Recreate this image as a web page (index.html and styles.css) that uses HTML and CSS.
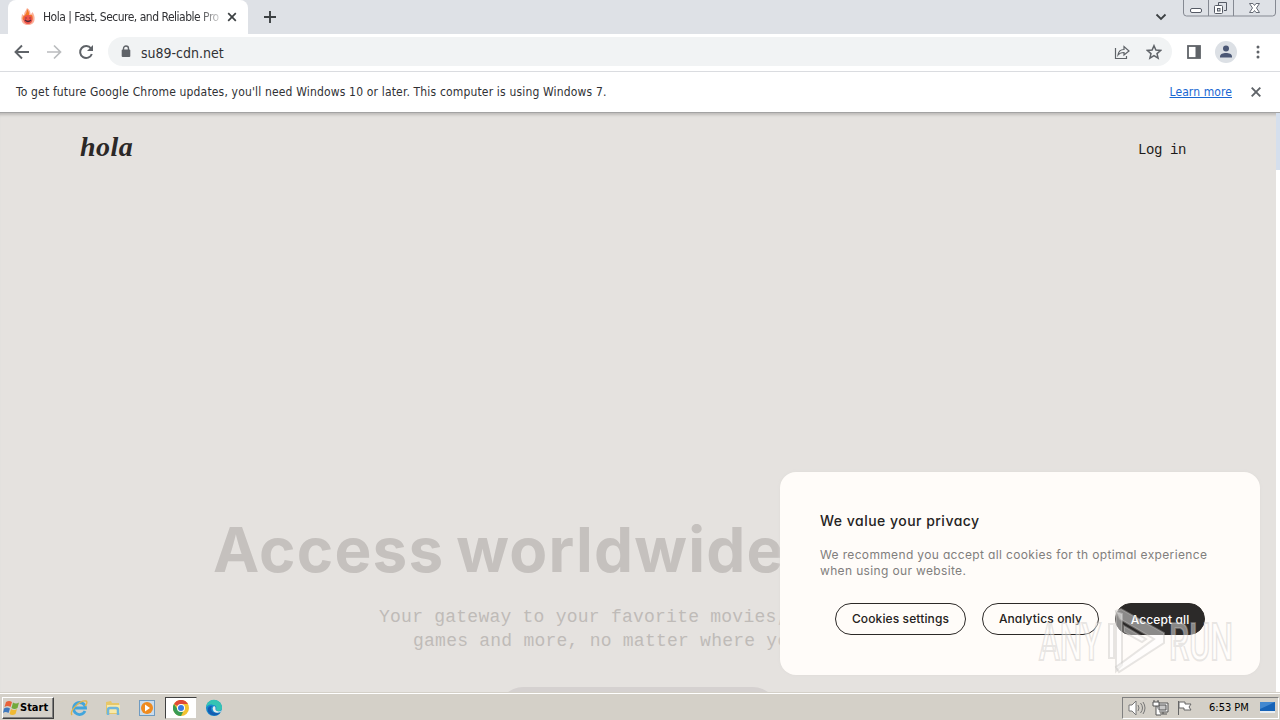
FILE: index.html
```html
<!DOCTYPE html>
<html lang="en">
<head>
  <meta charset="UTF-8" />
  <meta name="viewport" content="width=device-width, initial-scale=1.0"/>
  <title>Hola | Fast, Secure, and Reliable Proxy</title>
  <link rel="stylesheet" href="styles.css">
</head>
<body>

  <header class="tab-strip">
    <div class="tab">
      <svg class="favicon" width="16" height="18" viewBox="0 0 16 18">
        <path d="M2 6c1 1 1.500 1 2 1C4 4 6 3 7 0c2 1 3.500 3 3.500 6 1 0 1.500-1 2-2 1.500 2 2.500 5 2 8-.5 3.500-3 5-6.500 5s-6-1.500-6.500-5C1 9 2 8 2 6z" fill="#fbb09a"/>
        <path d="M7 1c1.500 2 2.500 4 2 6h3c1 2 1 4 0 5H3c-1-2 0-4 1-4 2-2 3-4 3-7z" fill="#f47b26"/>
        <circle cx="8" cy="11.500" r="4.500" fill="#ed5348"/>
        <path d="M5.500 10h1M9.500 10h1M5 12q3 3 6 0" stroke="#512735" stroke-width="1.200" fill="none"/>
      </svg>
      <span class="tab-title">Hola | Fast, Secure, and Reliable Pro</span>
      <svg class="tab-close" width="10" height="10" viewBox="0 0 10 10"><path d="M1.200 1.200l7.600 7.600M8.800 1.200L1.200 8.800" stroke="#3c4043" stroke-width="1.700"/></svg>
    </div>
    <svg class="new-tab" width="12" height="12" viewBox="0 0 12 12"><path d="M6 0v12M0 6h12" stroke="#3c4043" stroke-width="1.900"/></svg>
    <svg class="tab-search" width="12" height="8" viewBox="0 0 12 8"><path d="M1.500 1.500L6 6l4.500-4.500" stroke="#3c4043" stroke-width="1.800" fill="none"/></svg>
    <svg class="window-buttons" width="94" height="18" viewBox="0 0 94 18">
      <path d="M.5 0v13q0 3 3 3h86q3 0 3-3V0M25.500 0v16M50.500 0v16" fill="none" stroke="#858992"/>
      <rect x="7.500" y="8.500" width="11" height="4" rx="1.500" fill="#fff" stroke="#555a65"/>
      <path d="M35.500 5V2.500h8v8H41" fill="none" stroke="#555a65"/>
      <rect x="31.500" y="5.500" width="8" height="8" rx="1" fill="#fff" stroke="#555a65"/>
      <rect x="34.500" y="8.500" width="2.500" height="2.500" fill="#dee1e6" stroke="#555a65"/>
      <path d="M66.500 3.500h3.500l1.500 2 1.500-2h3.500l-3 4.500 3 4.500H73l-1.500-2-1.500 2h-3.500l3-4.500z" fill="#fff" stroke="#666b75"/>
    </svg>
  </header>

  <nav class="toolbar">
    <svg class="nav-icon" width="16" height="16" viewBox="0 0 16 16"><path d="M15 8H2M8 1.500L1.500 8 8 14.500" stroke="#5f6368" stroke-width="1.900" fill="none"/></svg>
    <svg class="nav-icon" width="16" height="16" viewBox="0 0 16 16"><path d="M1 8h13M8 1.500L14.500 8 8 14.500" stroke="#babcbe" stroke-width="1.700" fill="none"/></svg>
    <svg class="nav-icon" width="16" height="16" viewBox="0 0 16 16"><path d="M13 4.500A6 6 0 1 0 13.800 10" stroke="#5f6368" stroke-width="2" fill="none"/><path d="M15 1v6H9z" fill="#5f6368"/></svg>
    <div class="address-bar">
      <svg class="lock" width="10" height="13" viewBox="0 0 10 13"><path d="M2.500 5V3.500a2.500 2.500 0 0 1 5 0V5" fill="none" stroke="#5f6368" stroke-width="1.400"/><rect x=".7" y="4.500" width="8.600" height="7.500" rx="1" fill="#5f6368"/></svg>
      <span class="url">su89-cdn.net</span>
      <svg class="share" width="16" height="16" viewBox="0 0 16 16"><path d="M1.500 4v10.500h11V12M4 11c.5-4 3-5.500 6-5.500V2.500L15 7l-5 4V8.500C7 8.500 5.500 9 4 11z" fill="none" stroke="#5f6368" stroke-width="1.200"/></svg>
      <svg class="star" width="16" height="16" viewBox="0 0 16 16"><path d="M8 1.700l1.900 4.400 4.700.4-3.600 3.100 1.100 4.600L8 11.700l-4.100 2.500L5 9.600 1.400 6.500l4.700-.4z" fill="none" stroke="#5f6368" stroke-width="1.500"/></svg>
    </div>
    <svg class="side-panel" width="14" height="14" viewBox="0 0 14 14"><rect x="1" y="1" width="12" height="12" fill="#fff" stroke="#5f6368" stroke-width="1.800"/><path d="M8.500 1H13v12H8.500z" fill="#5f6368"/></svg>
    <svg class="avatar" width="22" height="22" viewBox="0 0 22 22"><circle cx="11" cy="11" r="11" fill="#dce0e5"/><circle cx="11" cy="7.500" r="3" fill="#4b5775"/><path d="M5 16.500v-1c0-2.500 3-3.500 6-3.500s6 1 6 3.500v1z" fill="#4b5775"/></svg>
    <svg class="menu-dots" width="4" height="14" viewBox="0 0 4 14"><g fill="#5f6368"><circle cx="2" cy="2" r="1.500"/><circle cx="2" cy="7" r="1.500"/><circle cx="2" cy="12" r="1.500"/></g></svg>
  </nav>

  <div class="infobar">
    <span class="infobar-text">To get future Google Chrome updates, you'll need Windows 10 or later. This computer is using Windows 7.</span>
    <a href="#" class="learn-more">Learn more</a>
    <svg width="10" height="10" viewBox="0 0 10 10"><path d="M.7.7l8.600 8.600M9.300.7L.7 9.300" stroke="#5f6368" stroke-width="1.900"/></svg>
  </div>

  <main class="page">
    <div class="site-header">
      <a class="logo">hola</a>
      <a class="login">Log in</a>
    </div>
    <section class="hero">
      <h1>Access worldwide</h1>
      <p>Your gateway to your favorite movies,</p>
      <p class="second">games and more, no matter where yo</p>
      <div class="hero-button"></div>
    </section>
    <div class="scrollbar"><div class="scroll-thumb"></div></div>

    <div class="cookie-box">
      <h2>We value your privacy</h2>
      <p>We recommend you accept all cookies for th optimal experience<br>when using our website.</p>
      <div class="cookie-buttons">
        <button class="settings">Cookies settings</button>
        <button class="analytics">Analytics only</button>
        <button class="accept">Accept all</button>
      </div>
    </div>

    <svg class="watermark" width="204" height="70" viewBox="0 0 204 70">
      <g fill="#fff" fill-opacity=".45" stroke="#c4c1be" stroke-opacity=".4" stroke-width="2">
        <text x="3" y="54" textLength="62" lengthAdjust="spacingAndGlyphs">ANY</text>
        <text x="133" y="54" textLength="64" lengthAdjust="spacingAndGlyphs">RUN</text>
        <path d="M73 18h5v34h-5zM80 6l6 2v51l-6 6z"/>
        <path d="M80 5l5-2 43 24v10L83 66l-3-5 38-28L84 13z"/>
        <path d="M88 20l22 13-4 3-18-10z"/>
      </g>
    </svg>
  </main>

  <footer class="taskbar">
    <button class="start">
      <svg width="17" height="16" viewBox="0 0 17 16"><path d="M3 2q3-2 6 0L7.500 7q-3-2-6 0z" fill="#e8623a"/><path d="M10 2.500q3 2 6 0L14.500 8q-3 2-6 0z" fill="#72a93b"/><path d="M1 8.500q3-2 6 0L5.500 13q-3-2-5.500 0z" fill="#3f78bd"/><path d="M8 9q3 2 6 0l-1.500 5q-3 2-6 0z" fill="#efb934"/></svg>
      Start
    </button>
    <div class="quick-launch">
      <svg width="18" height="18" viewBox="0 0 18 18"><path d="M15 12a6 6 0 1 1 .5-3H5" fill="none" stroke="#42a5dc" stroke-width="2.800"/><path d="M2 16C-1 12 10 1 16 2c2 1 0 4-1 5" fill="none" stroke="#e2b54d" stroke-width="1.400"/></svg>
      <svg width="18" height="18" viewBox="0 0 18 18"><path d="M2 3l5-1 1 2h7v11H2z" fill="#e7c769"/><path d="M3 6h13v8H3z" fill="#f8e9a8"/><path d="M4 16v-5q0-2 2-2h6q2 0 2 2v5" fill="none" stroke="#70b6dc" stroke-width="2.500"/></svg>
      <svg width="18" height="18" viewBox="0 0 18 18"><rect x="1.500" y="1.500" width="15" height="15" fill="#cadced" stroke="#6f9bc1"/><circle cx="9" cy="9" r="6" fill="#ef8b20"/><path d="M7 5.500l5 3.500-5 3.500z" fill="#fff"/></svg>
      <div class="task-active">
        <svg width="16" height="16" viewBox="0 0 16 16"><circle cx="8" cy="8" r="8" fill="#f2c230"/><path d="M8 8L1 4a8 8 0 0 1 14 0H8z" fill="#df4937"/><path d="M1 4l4 6 5 2-2 4A8 8 0 0 1 1 4z" fill="#399b54"/><circle cx="8" cy="8" r="4" fill="#fff"/><circle cx="8" cy="8" r="3" fill="#397be2"/></svg>
      </div>
      <svg width="18" height="18" viewBox="0 0 18 18"><circle cx="9" cy="9" r="8" fill="#168bcf"/><path d="M1.500 6A8 8 0 0 1 17 9c0 3-4 4-6 2 1-3 0-5-3-5-3-1-5 0-6.500 2z" fill="#35c4b3"/><path d="M7 7c-3 4 1 8 8 7-4 5-14 2-12-5 1-2 3-2 4-2z" fill="#145db1"/><path d="M9 7c3 1 0 4 3 5 2 1 4 0 5-1-1 3-8 4-9 0-1-2 0-3 1-4z" fill="#e7eced"/></svg>
    </div>
    <div class="tray">
      <svg width="18" height="16" viewBox="0 0 18 16"><path d="M1 5h3l4-4v14l-4-4H1z" fill="#fff" stroke="#777"/><path d="M10 5q2 3 0 6M12.500 3q4 5 0 10M15 2q4 6 0 12" fill="none" stroke="#777"/></svg>
      <svg width="18" height="16" viewBox="0 0 18 16"><path d="M5 3h11v9H5z" fill="#eee" stroke="#555"/><path d="M7 5h7v5H7zM8 14h7M11 12v2" fill="#c8c8c8" stroke="#555"/><path d="M1 2h6v4H1zM2 0v2M6 0v2M4 6v9h5" fill="#fff" stroke="#555"/></svg>
      <svg width="18" height="16" viewBox="0 0 18 16"><path d="M2.500 1v14M3 2h6v2h6l-2 3 2 3H8V8H3z" fill="#fff" stroke="#666"/></svg>
      <span class="clock">6:53 PM</span>
      <svg class="desktop-icon" width="15" height="15" viewBox="0 0 15 15"><path d="M0 2h15v9H0z" fill="#1763b7"/><path d="M0 2h15L0 9z" fill="#4288d0"/><path d="M0 11h15v2H0z" fill="#e8edf1"/></svg>
    </div>
  </footer>

</body>
</html>
```
FILE: styles.css
```css
* {
  box-sizing: border-box;
}
body {
  margin: 0;
  width: 1280px;
  height: 720px;
  overflow: hidden;
  display: flex;
  flex-direction: column;
  font-family: 'DejaVu Sans Condensed', 'DejaVu Sans', sans-serif;
  font-size: 12px;
  color: #303134;
  background: #fff;
}
svg {
  display: block;
  flex-shrink: 0;
}
h1, h2, p {
  margin: 0;
}
button {
  font: inherit;
  padding: 0;
}
.tab-strip {
  height: 34px;
  flex-shrink: 0;
  display: flex;
  background: #dee1e6;
  padding-left: 8px;
}
.tab {
  width: 240px;
  background: #fff;
  border-radius: 8px 8px 0 0;
  display: flex;
  align-items: center;
  padding-left: 12px;
}
.tab-title {
  width: 177px;
  margin-left: 7px;
  overflow: hidden;
  white-space: nowrap;
  letter-spacing: -0.5px;
  -webkit-mask-image: linear-gradient(to right, #000 155px, transparent 182px);
}
.tab-close {
  margin-left: 7px;
}
.new-tab {
  margin: 11px 0 0 16px;
}
.tab-search {
  margin: 13px 16px 0 auto;
}
.window-buttons {
  margin-right: 3px;
}
.toolbar {
  height: 38px;
  flex-shrink: 0;
  display: flex;
  align-items: center;
  padding: 0 20px 2px 14px;
  border-bottom: 1px solid #dadce0;
}
.nav-icon {
  margin-right: 16px;
}
.address-bar {
  width: 1064px;
  height: 29px;
  margin-left: -2px;
  display: flex;
  align-items: center;
  border-radius: 15px;
  background: #f1f3f4;
  padding: 0 10px 0 13px;
}
.url {
  margin-left: 10px;
  padding-top: 2px;
  font-size: 14px;
}
.share {
  margin-left: auto;
}
.star {
  margin-left: 16px;
}
.side-panel {
  margin-left: 15px;
}
.avatar {
  margin-left: 14px;
}
.menu-dots {
  margin-left: auto;
}
.infobar {
  height: 41px;
  flex-shrink: 0;
  display: flex;
  align-items: center;
  padding: 0 19px 1px 16px;
  border-bottom: 1px solid #a3a3a3;
}
.infobar-text {
  white-space: nowrap;
  letter-spacing: 0.165px;
}
.learn-more {
  margin-left: auto;
  margin-right: 19px;
  letter-spacing: 0.1px;
  color: #1967d2;
}
.page {
  position: relative;
  flex: 1;
  overflow: hidden;
  background: #e5e2df;
  box-shadow: inset 0 4px 3px -2px #bdbbb9;
}
.site-header {
  display: flex;
  justify-content: space-between;
  padding: 17px 94px 0 80px;
}
.logo {
  font: italic bold 28px/34px 'Liberation Serif', serif;
  letter-spacing: 0.5px;
  color: #2b2827;
}
.login {
  font: 14px/40px 'Liberation Mono', monospace;
  letter-spacing: -0.4px;
  color: #1d1b1a;
}
.hero {
  width: 1276px;
  margin-top: 332px;
}
.hero h1 {
  padding-left: 213px;
  font: 700 62px/96px Inter, sans-serif;
  letter-spacing: 1.2px;
  word-spacing: -4px;
  color: #c5c1be;
  white-space: nowrap;
}
.hero p {
  padding-left: 379px;
  font: 18px/24px 'Liberation Mono', monospace;
  letter-spacing: 0.24px;
  color: #bfbbb8;
}
.hero h1 + p {
  margin-top: 7px;
}
.hero .second {
  padding-left: 413px;
}
.hero-button {
  width: 280px;
  height: 50px;
  margin: 34px auto 0;
  border-radius: 25px;
  background: #d5d1d0;
}
.scrollbar {
  position: absolute;
  top: 0;
  right: 0;
  width: 4px;
  height: 100%;
  background: #fff;
}
.scroll-thumb {
  height: 57px;
  background: #d5dfed;
}
.cookie-box {
  position: absolute;
  left: 780px;
  bottom: 17px;
  width: 480px;
  height: 203px;
  padding: 38px 40px 0;
  border-radius: 16px;
  background: #fffcf9;
  box-shadow: 0 0 3px #dedbd8;
  font-family: Inter, sans-serif;
  font-feature-settings: 'cv11';
}
.cookie-box h2 {
  font-size: 14px;
  line-height: 22px;
  font-weight: 500;
  letter-spacing: 0.48px;
  color: #252323;
}
.cookie-box p {
  margin-top: 15px;
  line-height: 16px;
  letter-spacing: 0.35px;
  color: #817e7d;
  white-space: nowrap;
}
.cookie-buttons {
  display: flex;
  gap: 16px;
  margin: 24px 0 0 15px;
}
.cookie-buttons button {
  height: 32px;
  padding-bottom: 2px;
  border: 1px solid #2c2927;
  border-radius: 16px;
  background: transparent;
  color: #242120;
  font-size: 12px;
  font-weight: 500;
  letter-spacing: 0.12px;
}
.cookie-buttons .settings {
  width: 131px;
}
.cookie-buttons .analytics {
  width: 117px;
}
.cookie-buttons .accept {
  width: 90px;
  padding-bottom: 0;
  background: #2c2a29;
  color: #fff;
}
.watermark {
  position: absolute;
  left: 1036px;
  bottom: 16px;
  font: 500 51px Roboto, sans-serif;
}
.taskbar {
  height: 28px;
  flex-shrink: 0;
  display: flex;
  align-items: center;
  background: #d4d0c8;
  border-top: 1px solid #d4d0c8;
  box-shadow: inset 0 1px #fff;
  padding: 2px 1px 0 2px;
}
.start {
  width: 52px;
  height: 22px;
  display: flex;
  align-items: center;
  background: #d4d0c8;
  border: 1px solid;
  border-color: #fff #404040 #404040 #fff;
  box-shadow: inset -1px -1px #808080;
  font-weight: bold;
  font-size: 11px;
  color: #000;
}
.quick-launch {
  display: flex;
  align-items: center;
  margin-left: 16px;
}
.quick-launch > svg {
  margin-right: 16px;
}
.task-active {
  width: 32px;
  height: 22px;
  margin: 0 8px 0 -7px;
  display: flex;
  align-items: center;
  justify-content: center;
  background: #fff;
  border: 1px solid;
  border-color: #404040 #d4d0c8 #d4d0c8 #404040;
}
.tray {
  width: 157px;
  height: 22px;
  margin-left: auto;
  display: flex;
  align-items: center;
  gap: 6px;
  padding-left: 5px;
  border: 1px solid;
  border-color: #808080 #fff #fff #808080;
}
.clock {
  margin-left: 9px;
  width: 41px;
  font-size: 11px;
  white-space: nowrap;
  color: #000;
}
.desktop-icon {
  margin-left: 4px;
}
```
